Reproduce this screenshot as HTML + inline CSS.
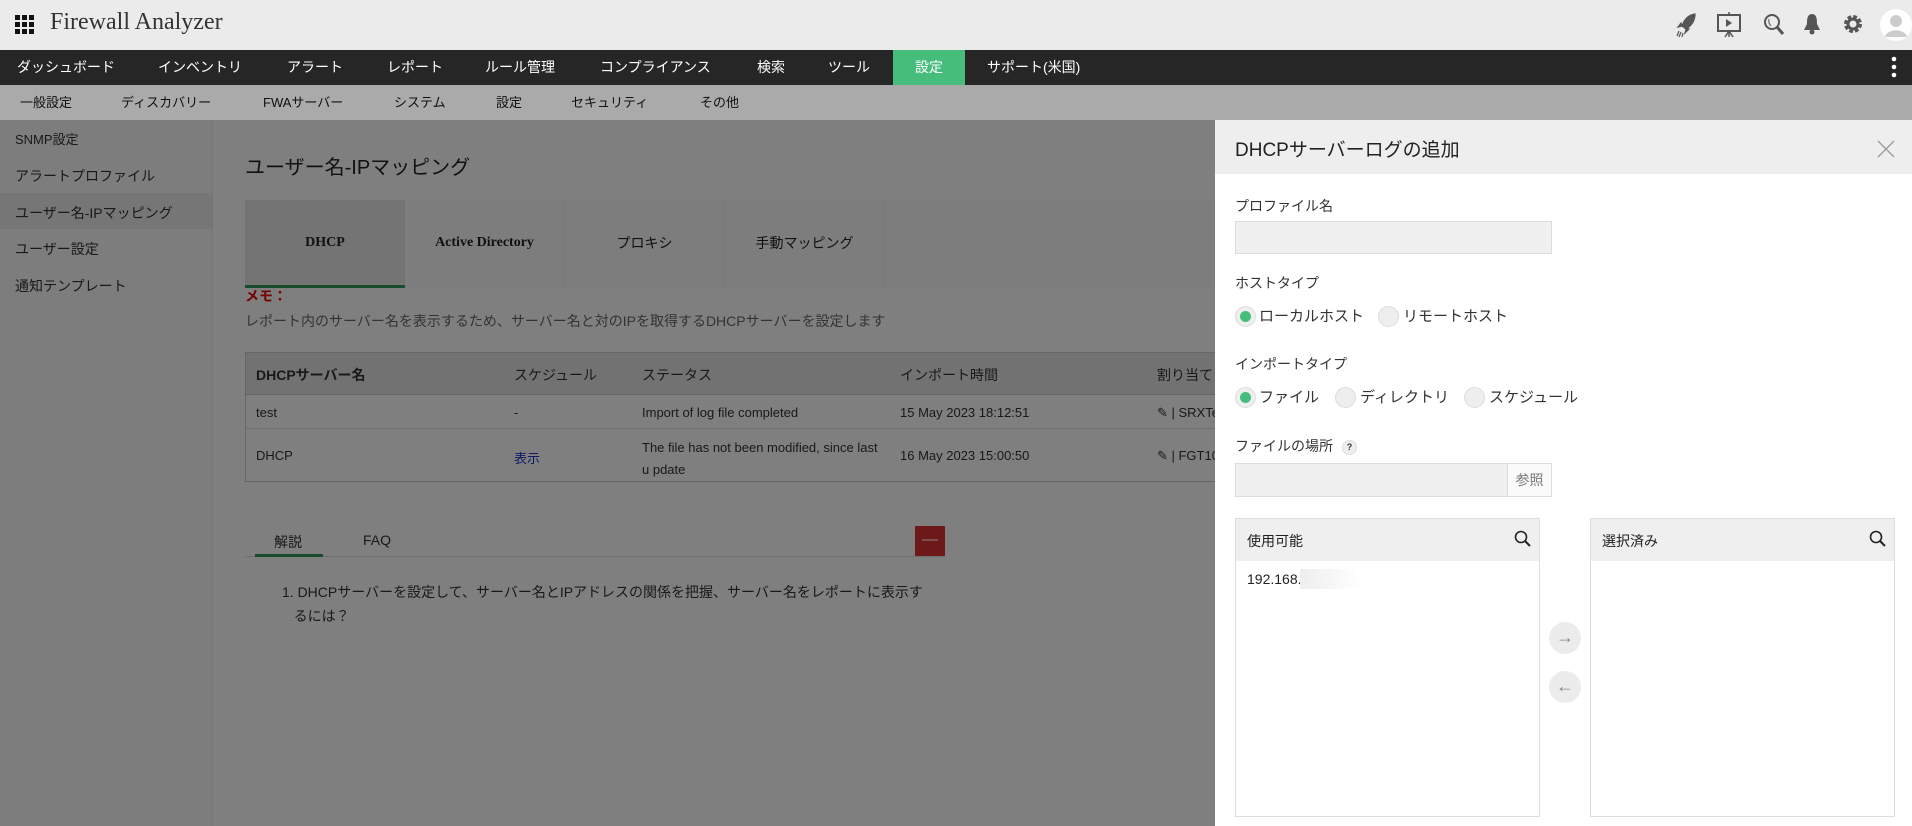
<!DOCTYPE html>
<html><head><meta charset="utf-8"><style>
*{margin:0;padding:0;box-sizing:border-box}
body{width:1912px;height:826px;overflow:hidden;position:relative;font-family:"Liberation Sans","Noto Sans CJK JP",sans-serif;background:#fff;color:#333}
.abs{position:absolute}
#top{left:0;top:0;width:1912px;height:50px;background:#ebebeb}
#nav{left:0;top:50px;width:1912px;height:35px;background:#262626;color:#fff;font-size:14px}
#nav span{position:absolute;top:0;height:35px;line-height:35px}
#sub{left:0;top:85px;width:1912px;height:35px;background:#aaaaaa;color:#111;font-size:13px}
#sub span{position:absolute;top:0;line-height:35px}
#side{left:0;top:120px;width:213px;height:706px;background:#fafafa;border-right:1px solid #eee;font-size:14px;color:#333}
#side div{position:absolute;left:15px}
.t{font-size:13px}
#ov{left:0;top:120px;width:1912px;height:706px;background:rgba(0,0,0,.5)}
#panel{left:1215px;top:120px;width:697px;height:706px;background:#fff}
.lbl{position:absolute;left:20px;font-size:14px;color:#333}
.rad{position:absolute;width:21px;height:21px;border-radius:50%;background:#eee;border:1px solid #ddd}
.rad.on::after{content:"";position:absolute;left:4px;top:4px;width:11px;height:11px;border-radius:50%;background:#45be7c}
.rl{position:absolute;font-size:15px;color:#333}
</style></head><body>
<div id="top" class="abs">
 <svg class="abs" style="left:15px;top:15px" width="20" height="20"><g fill="#111"><rect x="0" y="0" width="5" height="5"/><rect x="7" y="0" width="5" height="5"/><rect x="14" y="0" width="5" height="5"/><rect x="0" y="7" width="5" height="5"/><rect x="7" y="7" width="5" height="5"/><rect x="14" y="7" width="5" height="5"/><rect x="0" y="14" width="5" height="5"/><rect x="7" y="14" width="5" height="5"/><rect x="14" y="14" width="5" height="5"/></g></svg>
 <div class="abs" style="left:50px;top:9px;font-family:'Liberation Serif',serif;font-size:24px;color:#333">Firewall Analyzer</div>
 <svg class="abs" style="left:1675px;top:12px" width="24" height="26" viewBox="0 0 24 26"><path d="M20 2 C13 3 9 8 7 14 L11 17 C16 14 20 9 20 2Z M7 14 L3 15 L6 11Z M11 17 L10 21 L14 17Z M4 19 L2 24 M6 20 L4 25 M8 21 L7 25" stroke="#555" fill="#555" stroke-width="1.2"/></svg>
 <svg class="abs" style="left:1716px;top:11px" width="26" height="28" viewBox="0 0 26 28"><rect x="2" y="4" width="22" height="16" fill="none" stroke="#555" stroke-width="2"/><path d="M10 8 L16 12 L10 16Z" fill="#555"/><path d="M13 1 V4 M13 20 V26 M9 26 L13 20 L17 26" stroke="#555" stroke-width="1.5" fill="none"/></svg>
 <svg class="abs" style="left:1763px;top:13px" width="22" height="24" viewBox="0 0 22 24"><circle cx="9" cy="9" r="7" fill="none" stroke="#555" stroke-width="2"/><path d="M14 14 L20 21" stroke="#555" stroke-width="3"/><path d="M6 6 Q5 10 8 13" stroke="#555" fill="none"/></svg>
 <svg class="abs" style="left:1803px;top:12px" width="18" height="24" viewBox="0 0 18 24"><path d="M9 2 C4 2 4 8 4 12 L1 18 H17 L14 12 C14 8 14 2 9 2Z" fill="#555"/><circle cx="9" cy="20" r="2.5" fill="#555"/></svg>
 <svg class="abs" style="left:1842px;top:13px" width="22" height="22" viewBox="0 0 22 22"><circle cx="11" cy="11" r="7" fill="none" stroke="#555" stroke-width="4" stroke-dasharray="3.5 2"/><circle cx="11" cy="11" r="5" fill="none" stroke="#555" stroke-width="3"/></svg>
 <svg class="abs" style="left:1880px;top:9px" width="32" height="32" viewBox="0 0 32 32"><circle cx="16" cy="16" r="16" fill="#fff"/><circle cx="16" cy="12" r="6" fill="#ccc"/><path d="M5 28 C7 19 25 19 27 28Z" fill="#ccc"/></svg>
</div>
<div id="nav" class="abs">
 <span style="left:17px">ダッシュボード</span><span style="left:158px">インベントリ</span><span style="left:287px">アラート</span><span style="left:387px">レポート</span><span style="left:485px">ルール管理</span><span style="left:600px">コンプライアンス</span><span style="left:757px">検索</span><span style="left:828px">ツール</span>
 <span style="left:893px;width:72px;background:#47bd7c;text-align:center">設定</span><span style="left:987px">サポート(米国)</span>
 <svg class="abs" style="left:1891px;top:6px" width="6" height="22"><circle cx="3" cy="3" r="2.3" fill="#fff"/><circle cx="3" cy="11" r="2.3" fill="#fff"/><circle cx="3" cy="19" r="2.3" fill="#fff"/></svg>
</div>
<div id="sub" class="abs">
 <span style="left:20px">一般設定</span><span style="left:121px">ディスカバリー</span><span style="left:263px">FWAサーバー</span><span style="left:394px">システム</span><span style="left:496px">設定</span><span style="left:571px">セキュリティ</span><span style="left:700px">その他</span>
</div>
<div id="side" class="abs">
 <div style="top:9px" class="t">SNMP設定</div>
 <div style="top:46px">アラートプロファイル</div>
 <div style="left:0;top:73px;width:213px;height:36px;background:#ececec"></div>
 <div style="top:83px">ユーザー名-IPマッピング</div>
 <div style="top:119px">ユーザー設定</div>
 <div style="top:156px">通知テンプレート</div>
</div>
<div class="abs" style="left:245px;top:151px;font-size:20px;color:#222">ユーザー名-IPマッピング</div>
<div class="abs" style="left:245px;top:200px;width:1000px;height:88px;background:#fbfbfb"></div>
<div class="abs" style="left:245px;top:200px;width:160px;height:88px;background:#e9e9e9;border-bottom:3px solid #2e9a5c;text-align:center;line-height:85px;font-size:14px;font-weight:bold;font-family:'Liberation Serif',serif;color:#222">DHCP</div>
<div class="abs" style="left:405px;top:200px;width:160px;height:88px;border-right:1px solid #eee;text-align:center;line-height:86px;font-size:14px;font-weight:bold;font-family:'Liberation Serif',serif;color:#222">Active Directory</div>
<div class="abs" style="left:565px;top:200px;width:160px;height:88px;border-right:1px solid #eee;text-align:center;line-height:86px;font-size:14px;color:#222">プロキシ</div>
<div class="abs" style="left:725px;top:200px;width:160px;height:88px;border-right:1px solid #eee;text-align:center;line-height:86px;font-size:14px;color:#222">手動マッピング</div>
<div class="abs" style="left:245px;top:286px;font-size:14px;color:#e00;font-weight:bold">メモ：</div>
<div class="abs" style="left:245px;top:311px;font-size:14px;color:#666">レポート内のサーバー名を表示するため、サーバー名と対のIPを取得するDHCPサーバーを設定します</div>
<div class="abs" style="left:245px;top:352px;width:1000px;height:130px;border:1px solid #ccc;font-size:13px;color:#333">
 <div class="abs" style="left:0;top:0;width:1000px;height:42px;background:#e4e4e4;border-bottom:1px solid #ccc"></div>
 <div class="abs" style="left:10px;top:12px;font-size:14px;font-weight:bold">DHCPサーバー名</div>
 <div class="abs" style="left:268px;top:12px;font-size:14px">スケジュール</div>
 <div class="abs" style="left:396px;top:12px;font-size:14px">ステータス</div>
 <div class="abs" style="left:654px;top:12px;font-size:14px">インポート時間</div>
 <div class="abs" style="left:911px;top:12px;font-size:14px">割り当て</div>
 <div class="abs" style="left:10px;top:52px">test</div><div class="abs" style="left:268px;top:52px">-</div><div class="abs" style="left:396px;top:52px">Import of log file completed</div><div class="abs" style="left:654px;top:52px">15 May 2023 18:12:51</div><div class="abs" style="left:911px;top:52px">✎ | SRXTe</div>
 <div class="abs" style="left:0;top:75px;width:1000px;height:1px;background:#ddd"></div>
 <div class="abs" style="left:10px;top:95px">DHCP</div><div class="abs" style="left:268px;top:95px;color:#2233cc">表示</div><div class="abs" style="left:396px;top:84px;width:240px;line-height:22px">The file has not been modified, since last u pdate</div><div class="abs" style="left:654px;top:95px">16 May 2023 15:00:50</div><div class="abs" style="left:911px;top:95px">✎ | FGT10</div>
</div>
<div class="abs" style="left:245px;top:556px;width:700px;height:1px;background:#ddd"></div>
<div class="abs" style="left:255px;top:554px;width:68px;height:3px;background:#2e9a5c"></div>
<div class="abs" style="left:274px;top:532px;font-size:14px">解説</div>
<div class="abs" style="left:363px;top:532px;font-size:14px">FAQ</div>
<div class="abs" style="left:915px;top:526px;width:30px;height:30px;background:#d33;color:#fff;text-align:center;line-height:28px">—</div>
<div class="abs" style="left:282px;top:580px;font-size:14px;line-height:24px;width:680px">1. DHCPサーバーを設定して、サーバー名とIPアドレスの関係を把握、サーバー名をレポートに表示す<br>&nbsp;&nbsp;&nbsp;るには？</div>
<div id="ov" class="abs"></div>
<div id="panel" class="abs">
 <div class="abs" style="left:0;top:0;width:697px;height:54px;background:#eeeeee"></div>
 <div class="abs" style="left:20px;top:15px;font-size:19px;color:#222">DHCPサーバーログの追加</div>
 <svg class="abs" style="left:662px;top:20px" width="18" height="18"><path d="M1 1 L17 17 M17 1 L1 17" stroke="#999" stroke-width="1.3"/></svg>
 <div class="lbl" style="top:76px">プロファイル名</div>
 <div class="abs" style="left:20px;top:101px;width:317px;height:33px;background:#f0f0f0;border:1px solid #ddd"></div>
 <div class="lbl" style="top:153px">ホストタイプ</div>
 <div class="rad on" style="left:20px;top:186px"></div><div class="rl" style="left:44px;top:185px">ローカルホスト</div>
 <div class="rad" style="left:163px;top:186px"></div><div class="rl" style="left:188px;top:185px">リモートホスト</div>
 <div class="lbl" style="top:234px">インポートタイプ</div>
 <div class="rad on" style="left:20px;top:267px"></div><div class="rl" style="left:44px;top:266px">ファイル</div>
 <div class="rad" style="left:120px;top:267px"></div><div class="rl" style="left:145px;top:266px">ディレクトリ</div>
 <div class="rad" style="left:249px;top:267px"></div><div class="rl" style="left:274px;top:266px">スケジュール</div>
 <div class="lbl" style="top:316px">ファイルの場所</div>
 <div class="abs" style="left:127px;top:320px;width:15px;height:15px;border-radius:50%;background:#eee;border:1px solid #ddd;font-size:9px;text-align:center;line-height:13px;font-weight:bold">?</div>
 <div class="abs" style="left:20px;top:343px;width:317px;height:34px;background:#f0f0f0;border:1px solid #ddd"></div>
 <div class="abs" style="left:292px;top:344px;width:44px;height:32px;background:#fafafa;border-left:1px solid #ddd;font-size:14px;color:#777;text-align:center;line-height:32px">参照</div>
 <div class="abs" style="left:20px;top:398px;width:305px;height:299px;border:1px solid #ddd">
  <div class="abs" style="left:0;top:0;width:303px;height:42px;background:#efefef"></div>
  <div class="abs" style="left:11px;top:12px;font-size:14px;color:#222">使用可能</div>
  <svg class="abs" style="left:278px;top:11px" width="18" height="18"><circle cx="7" cy="7" r="5.5" fill="none" stroke="#222" stroke-width="1.6"/><path d="M11 11 L16 16" stroke="#222" stroke-width="2"/></svg>
  <div class="abs" style="left:11px;top:52px;font-size:14px;color:#222">192.168.</div>
  <div class="abs" style="left:64px;top:50px;width:60px;height:20px;background:linear-gradient(90deg,#eee,#f6f6f6,#fff)"></div>
 </div>
 <div class="abs" style="left:334px;top:502px;width:32px;height:32px;border-radius:50%;background:#ececec;color:#888;text-align:center;line-height:30px;font-size:18px">→</div>
 <div class="abs" style="left:334px;top:551px;width:32px;height:32px;border-radius:50%;background:#ececec;color:#888;text-align:center;line-height:30px;font-size:18px">←</div>
 <div class="abs" style="left:375px;top:398px;width:305px;height:299px;border:1px solid #ddd">
  <div class="abs" style="left:0;top:0;width:303px;height:42px;background:#efefef"></div>
  <div class="abs" style="left:11px;top:12px;font-size:14px;color:#222">選択済み</div>
  <svg class="abs" style="left:278px;top:11px" width="18" height="18"><circle cx="7" cy="7" r="5.5" fill="none" stroke="#222" stroke-width="1.6"/><path d="M11 11 L16 16" stroke="#222" stroke-width="2"/></svg>
 </div>
</div>
</body></html>
